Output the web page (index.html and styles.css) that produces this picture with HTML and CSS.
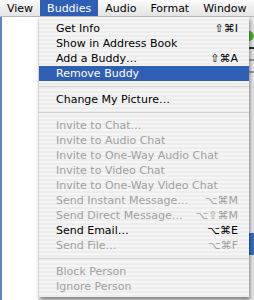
FILE: index.html
```html
<!DOCTYPE html>
<html lang="en">
<head>
    <meta charset="UTF-8">
    <title>Buddies Menu</title>
    <link rel="stylesheet" href="styles.css">
</head>
<body>
    <div class="menubar">
        <span class="menu-title">View</span>
        <span class="menu-title active">Buddies</span>
        <span class="menu-title">Audio</span>
        <span class="menu-title">Format</span>
        <span class="menu-title">Window</span>
    </div>

    <div class="desktop">
        <div class="left-pane"></div>
        <div class="middle-pane"></div>
        <div class="right-pane">
            <div class="status-dot"></div>
            <div class="line dark"></div>
            <div class="line"></div>
            <div class="line"></div>
            <div class="blue-box"></div>
        </div>
    </div>

    <!-- dropdown sits over the window content -->
    <ul class="dropdown">
        <li class="item"><span>Get Info</span><span class="key">⇧⌘I</span></li>
        <li class="item"><span>Show in Address Book</span></li>
        <li class="item"><span>Add a Buddy…</span><span class="key">⇧⌘A</span></li>
        <li class="item selected"><span>Remove Buddy</span></li>
        <li class="separator"></li>
        <li class="item"><span>Change My Picture…</span></li>
        <li class="separator"></li>
        <li class="item disabled"><span>Invite to Chat…</span></li>
        <li class="item disabled"><span>Invite to Audio Chat</span></li>
        <li class="item disabled"><span>Invite to One-Way Audio Chat</span></li>
        <li class="item disabled"><span>Invite to Video Chat</span></li>
        <li class="item disabled"><span>Invite to One-Way Video Chat</span></li>
        <li class="item disabled"><span>Send Instant Message…</span><span class="key">⌥⌘M</span></li>
        <li class="item disabled"><span>Send Direct Message…</span><span class="key">⌥⇧⌘M</span></li>
        <li class="item"><span>Send Email…</span><span class="key">⌥⌘E</span></li>
        <li class="item disabled"><span>Send File…</span><span class="key">⌥⌘F</span></li>
        <li class="separator"></li>
        <li class="item disabled"><span>Block Person</span></li>
        <li class="item disabled"><span>Ignore Person</span></li>
    </ul>
</body>
</html>
```

FILE: styles.css
```css
body {
    margin: 0;
    width: 254px;
    height: 300px;
    overflow: hidden;
    position: relative;
    font-family: "DejaVu Sans", sans-serif;
    font-size: 11px;
    background: #ffffff;
}
.menubar {
    display: flex;
    height: 17px;
    background: linear-gradient(#fbfbfb, #e4e4e4);
    border-bottom: 1px solid #b8b8b8;
    box-sizing: border-box;
}
.menu-title {
    padding: 0 7px;
    line-height: 17px;
    color: #000;
    white-space: nowrap;
}
.menu-title.active {
    background: #2f5fb4;
    color: #fff;
}
.desktop {
    display: flex;
    height: 283px;
}
.left-pane {
    width: 39px;
    border-left: 2px solid #5b86c8;
    box-sizing: border-box;
    background: #fff;
}
.middle-pane {
    width: 208px;
    background: #eeeeee;
}
.right-pane {
    flex: 1;
    background: #e6e6e6;
    display: flex;
    flex-direction: column;
    padding-top: 14px;
}
.status-dot {
    width: 10px;
    height: 10px;
    border-radius: 50%;
    background: #5aa83c;
    margin-left: 2px;
}
.line {
    height: 2px;
    background: #9a9a9a;
    margin-top: 10px;
}
.line.dark {
    background: #333;
    margin-top: 6px;
}
.blue-box {
    height: 22px;
    background: #3a6cc0;
    margin-top: 160px;
}
.dropdown {
    position: absolute;
    left: 39px;
    top: 17px;
    width: 210px;
    margin: 0;
    padding: 4px 0 3px;
    list-style: none;
    box-sizing: border-box;
    background: repeating-linear-gradient(#f5f5f5 0, #f5f5f5 2px, #ededed 2px, #ededed 4px);
    box-shadow: 1px 3px 4px rgba(0, 0, 0, 0.45);
}
.item {
    display: flex;
    justify-content: space-between;
    height: 15px;
    line-height: 15px;
    padding: 0 11px 0 17px;
    color: #000;
    white-space: nowrap;
}
.item.disabled {
    color: #a0a0a0;
}
.item.selected {
    background: #2f5fb4;
    color: #fff;
}
.separator {
    height: 11px;
    background: linear-gradient(transparent 5px, #d2d2d2 5px, #d2d2d2 6px, transparent 6px);
}
```
